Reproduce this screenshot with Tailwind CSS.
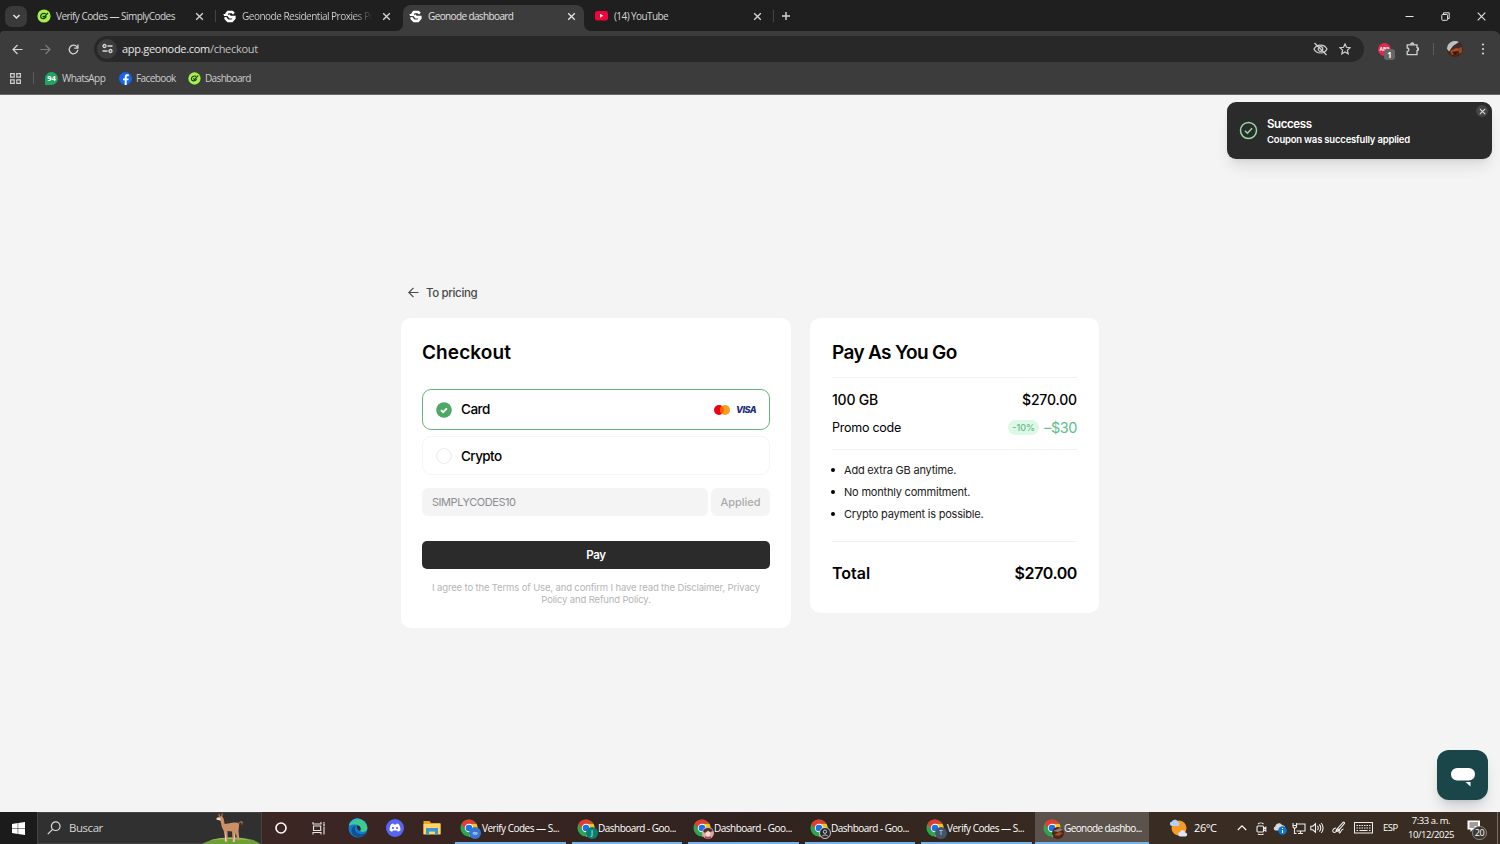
<!DOCTYPE html>
<html lang="es">
<head>
    <meta charset="UTF-8">
    <meta name="viewport" content="width=device-width, initial-scale=1.0">
    <title>Geonode dashboard</title>
    <script src="https://cdn.jsdelivr.net/npm/@tailwindcss/browser@4"></script>
    <style>
        body { font-family: 'Inter', 'Liberation Sans', sans-serif; }
        .ui { font-family: 'Open Sans', 'Noto Sans', sans-serif; }
    </style>
</head>
<body class="w-[1500px] h-[844px] overflow-hidden flex flex-col bg-[#f4f4f4] text-black">

    <!-- Iconos reutilizables -->
    <svg class="hidden">
        <symbol id="x" viewBox="0 0 10 10"><path d="M2 2l6 6M8 2L2 8" stroke="currentColor" stroke-width="1.200" fill="none"/></symbol>
        <symbol id="simply" viewBox="0 0 14 14">
            <circle cx="7" cy="7" r="6.600" fill="#a6f04c"/>
            <path d="M8.800 4.700C6.300 3.700 3.500 5.100 3.700 7.500C3.900 10.300 8.600 10.400 9.300 7.200M5.700 6.900l1.200 1.200L11 4" fill="none" stroke="#1d3b12" stroke-width="1.200"/>
        </symbol>
        <symbol id="geonode" viewBox="0 0 14 14">
            <path d="M11.800 3.800L9.800 2.200H5.300L3.400 4.600M2.300 7.800l.8 1.600 2.300 2.300h4.300l2.500-2.700V7.700H7.600L5.800 5.600" fill="none" stroke="#fff" stroke-width="2.800"/>
            <path d="M.3 4.300h5l1 2.200H1.300z" fill="#fff"/>
        </symbol>
        <symbol id="chrome" viewBox="0 0 20 20">
            <circle cx="10" cy="10" r="9.500" fill="#2da44e"/>
            <path d="M10 5.300h8.200A9.500 9.500 0 0 1 9.600 19.500L14.200 12z" fill="#fbc116"/>
            <path d="M1.800 5.200A9.500 9.500 0 0 1 18.200 5.300H10L6 12.300z" fill="#e53c30"/>
            <circle cx="10" cy="10" r="4.700" fill="#fff"/><circle cx="10" cy="10" r="3.700" fill="#1a73e8"/>
        </symbol>
    </svg>

    <!-- Barra de pestañas -->
    <div class="ui h-[31px] shrink-0 bg-[#1f1f1f] flex items-center pt-px text-[10px] text-[#d6d6d6] whitespace-nowrap">
        <div class="ml-[5px] w-[22px] h-[21px] rounded-[7px] bg-[#3a3a3a] flex items-center justify-center">
            <svg class="w-[9px] h-[9px]" viewBox="0 0 9 9"><path d="M1.500 3l3 3 3-3" fill="none" stroke="#e3e3e3" stroke-width="1.500"/></svg>
        </div>
        <div class="ml-[10px] w-[179px] flex items-center">
            <svg class="w-[14px] h-[14px] shrink-0"><use href="#simply"/></svg>
            <span class="ml-[5px] mt-px flex-1 tracking-[-0.54px]">Verify Codes — SimplyCodes</span>
            <svg class="w-[11px] h-[11px] mr-[11px]"><use href="#x"/></svg>
        </div>
        <div class="ml-[-1px] w-px h-[12px] bg-[#454545]"></div>
        <div class="pl-[7px] w-[187px] flex items-center">
            <svg class="w-[13px] h-[13px] shrink-0"><use href="#geonode"/></svg>
            <span class="ml-[6px] mt-px w-[131px] tracking-[-0.5px] bg-linear-to-r from-[#d6d6d6] from-85% to-[#1f1f1f] bg-clip-text text-transparent">Geonode Residential Proxies Pri</span>
            <svg class="w-[11px] h-[11px] ml-[8px] shrink-0"><use href="#x"/></svg>
        </div>
        <div class="relative self-end shrink-0 w-[181px] h-[26px] rounded-t-[8px] bg-[#3c3c3c] flex items-center pl-[6px] pb-[4px] text-[#e3e3e3]">
            <svg class="absolute -left-[7px] bottom-0 w-[7px] h-[7px]" viewBox="0 0 7 7"><path d="M7 0v7H0A7 7 0 0 0 7 0" fill="#3c3c3c"/></svg>
            <svg class="absolute -right-[7px] bottom-0 w-[7px] h-[7px]" viewBox="0 0 7 7"><path d="M0 0v7H7A7 7 0 0 1 0 0" fill="#3c3c3c"/></svg>
            <svg class="w-[13px] h-[13px]"><use href="#geonode"/></svg>
            <span class="ml-[6px] mt-px flex-1 tracking-[-0.62px]">Geonode dashboard</span>
            <svg class="w-[11px] h-[11px] mr-[7px]"><use href="#x"/></svg>
        </div>
        <div class="w-[189px] pl-[11px] flex items-center">
            <svg class="w-[13px] h-[10px]" viewBox="0 0 13 10"><rect width="13" height="9.500" rx="2.500" fill="#f4033a"/><path d="M5 2.800v4l3.300-2z" fill="#fff"/></svg>
            <span class="ml-[6px] mt-px flex-1 tracking-[-0.58px]">(14) YouTube</span>
            <svg class="w-[11px] h-[11px] mr-[10px]"><use href="#x"/></svg>
        </div>
        <div class="w-px h-[12px] bg-[#454545]"></div>
        <svg class="ml-[7px] w-[10px] h-[10px]" viewBox="0 0 10 10"><path d="M5 1v8M1 5h8" stroke="#d8d8d8" stroke-width="1.400"/></svg>
        <div class="ml-auto flex items-center text-[#e6e6e6]">
            <svg class="w-[9px] h-[9px]" viewBox="0 0 9 9"><path d="M.5 4.500h8" stroke="currentColor"/></svg>
            <svg class="ml-[27px] w-[9px] h-[9px]" viewBox="0 0 9 9" fill="none" stroke="currentColor"><rect x=".8" y="2.500" width="5.800" height="5.800" rx=".8"/><path d="M2.500 2.300V.8h5.700v5.700H6.800"/></svg>
            <svg class="ml-[27px] mr-[14px] w-[9px] h-[9px]" viewBox="0 0 9 9"><path d="M.7.700l7.600 7.600M8.300.700L.7 8.300" stroke="currentColor" stroke-width="1.100"/></svg>
        </div>
    </div>

    <!-- Barra de herramientas -->
    <div class="bg-[#1f1f1f] shrink-0">
        <div class="ui h-[37px] bg-[#3c3c3c] rounded-tr-[6px] rounded-tl-[4px] flex items-center pb-[2px] text-[#d5d5d5]">
            <svg class="ml-[12px] mt-px w-[11px] h-[11px]" viewBox="0 0 11 11" fill="none" stroke="currentColor" stroke-width="1.200"><path d="M10.500 5.500H1M5.500 1L1 5.500 5.500 10"/></svg>
            <svg class="ml-[17px] mt-px w-[11px] h-[11px] text-[#7c7c7c]" viewBox="0 0 11 11" fill="none" stroke="currentColor" stroke-width="1.200"><path d="M.5 5.500H10M5.500 1L10 5.500 5.500 10"/></svg>
            <svg class="ml-[17px] mt-px w-[11px] h-[11px]" viewBox="0 0 11 11" fill="none" stroke="currentColor" stroke-width="1.300"><path d="M9.800 5.800A4.300 4.300 0 1 1 8.800 2.700L9.800 3.800"/><path d="M9.900.5v3.600H6.300"/></svg>
            <div class="ml-[15px] w-[1270px] h-[26px] rounded-full bg-[#282828] flex items-center pl-[3px] pr-[13px]">
                <div class="w-[20px] h-[20px] rounded-full bg-[#3c3c3c] flex items-center justify-center">
                    <svg class="w-[11px] h-[11px]" viewBox="0 0 11 11" fill="none" stroke="#dadada" stroke-width="1.300"><circle cx="2.500" cy="3" r="1.500"/><path d="M5.500 3h5M.5 8h5"/><circle cx="8.500" cy="8" r="1.500"/></svg>
                </div>
                <span class="ml-[5px] mt-[2px] flex-1 text-[11px] tracking-[-0.3px] text-[#e8e8e8]">app.geonode.com<span class="text-[#c2c2c2]">/checkout</span></span>
                <svg class="w-[15px] h-[14px]" viewBox="0 0 15 14" fill="none" stroke="#cfcfcf" stroke-width="1.200"><path d="M1 7c2.500-5.300 10.500-5.300 13 0-2.500 5.300-10.500 5.300-13 0z"/><circle cx="7.500" cy="7" r="2.300"/><path d="M1.500 1l12 12"/></svg>
                <svg class="ml-[11px] w-[12px] h-[12px]" viewBox="0 0 12 12" fill="none" stroke="#cfcfcf" stroke-width="1.200"><path d="M6 1l1.500 3.300 3.600.4-2.700 2.400.8 3.600L6 8.900l-3.200 1.800.8-3.600L.9 4.700l3.600-.4z"/></svg>
            </div>
            <div class="relative ml-[14px] mt-px w-[13px] h-[13px] rounded-full bg-[#e4284a] text-[5px] font-bold text-white text-center leading-[12px]">ABP
                <span class="absolute left-[6px] top-[6px] w-[11px] h-[11px] rounded-[3px] bg-[#666] text-[8px] leading-[11px] text-white">1</span>
            </div>
            <svg class="ml-[15px] w-[14px] h-[14px]" viewBox="0 0 14 14" fill="none" stroke="#cfcfcf" stroke-width="1.300"><path d="M1.200 2.800H11v2.800a1.500 1.500 0 0 1 0 3v4H1.200V9.400a1.700 1.700 0 0 0 0-3.400z"/><path d="M4.700 2.400a1.500 1.500 0 0 1 3 0M11.300 5.700a1.500 1.500 0 0 1 0 2.900" fill="#cfcfcf"/></svg>
            <div class="ml-[13px] w-px h-[12px] bg-[#5c5c5c]"></div>
            <svg class="ml-[13px] w-[16px] h-[16px]" viewBox="0 0 16 16"><circle cx="8" cy="8" r="8" fill="#4c2418"/><path d="M0 8A8 8 0 0 1 12 1L6 5 2 10.500z" fill="#b8c0c0"/><path d="M6 6l7-4 2 3-6 3z" fill="#37302c"/><path d="M3 10l6-3 5 1-4 3-5 3z" fill="#a44c24"/><path d="M5 11l6-1-3 4z" fill="#30150f"/><path d="M12 7l3-1v5l-3 2z" fill="#8f4a2a"/></svg>
            <svg class="ml-[18px] w-[4px] h-[12px]" viewBox="0 0 4 12" fill="#d5d5d5"><circle cx="2" cy="1.500" r="1.100"/><circle cx="2" cy="6" r="1.100"/><circle cx="2" cy="10.500" r="1.100"/></svg>
        </div>
    </div>

    <!-- Marcadores -->
    <div class="ui h-[27px] shrink-0 bg-[#3c3c3c] border-b border-[#6b6b6b] flex items-center pb-[6px] text-[10px] text-[#cccccc]">
        <svg class="ml-[10px] w-[11px] h-[11px]" viewBox="0 0 11 11" fill="none" stroke="#cfcfcf" stroke-width="1.200"><path d="M.6.600h3.600v3.600H.6zM6.800.600h3.600v3.600H6.800zM.6 6.800h3.600v3.600H.6zM6.800 6.800h3.600v3.600H6.800z"/></svg>
        <div class="ml-[12px] w-px h-[12px] bg-[#5c5c5c]"></div>
        <span class="ml-[11px] w-[13px] h-[13px] rounded-full rounded-bl-[3px] bg-[#1fa463] text-white text-[7.500px] font-bold leading-[13px] text-center">94</span>
        <span class="ml-[4px] mt-px w-[43px] tracking-[-0.58px]">WhatsApp</span>
        <svg class="ml-[14px] w-[13px] h-[13px]" viewBox="0 0 13 13"><circle cx="6.500" cy="6.500" r="6.500" fill="#1565f0"/><path d="M7.700 13V8.300h1.700l.3-1.900h-2V5.300c0-.7.3-1.100 1.200-1.100h.9V2.500C8 2.100 5.700 2.300 5.700 4.900v1.500H4v1.900h1.700V13z" fill="#fff"/></svg>
        <span class="ml-[4px] mt-px w-[40px] tracking-[-0.6px]">Facebook</span>
        <svg class="ml-[12px] w-[13px] h-[13px]"><use href="#simply"/></svg>
        <span class="ml-[4px] mt-px tracking-[-0.65px]">Dashboard</span>
    </div>

    <!-- Página de pago -->
    <main class="relative flex-1 bg-[#f4f4f4]">
        <div class="w-[698px] ml-[401px] pt-[188px]">
            <a class="ml-[7px] h-[19px] flex items-center gap-[7px] text-[11.500px] font-medium text-[#4a4a4a]">
                <svg class="w-[11px] h-[11px]" viewBox="0 0 11 11" fill="none" stroke="currentColor" stroke-width="1.200"><path d="M10.500 5.500H.8M5.500.800L.8 5.500l4.700 4.700"/></svg>
                <span class="mt-[2px] tracking-[-0.35px]">To pricing</span>
            </a>
            <div class="mt-[16px] flex items-start justify-between">
                <!-- Formulario -->
                <section class="w-[390px] h-[310px] rounded-[10px] bg-white px-[22px] pt-[21px]">
                    <h1 class="-ml-px h-[28px] leading-[28px] text-[19px] font-semibold tracking-[0.1px]">Checkout</h1>
                    <div class="mt-[22px] -ml-px -mr-px h-[41px] rounded-[9px] border border-[#68b37c] flex items-center px-[13px]">
                        <svg class="w-[16px] h-[16px]" viewBox="0 0 16 16"><circle cx="8" cy="8" r="7.800" fill="#4fa865"/><path d="M5 8.200l2.100 2 3.800-3.900" fill="none" stroke="#fff" stroke-width="1.800"/></svg>
                        <span class="ml-[9px] flex-1 text-[13.500px] font-medium tracking-[-0.5px]">Card</span>
                        <svg class="w-[16px] h-[10px]" viewBox="0 0 16 10"><circle cx="5" cy="5" r="5" fill="#eb001b"/><circle cx="11" cy="5" r="5" fill="#f79e1b"/><path d="M8 1a5 5 0 0 1 0 8 5 5 0 0 1 0-8" fill="#ff5f00"/></svg>
                        <span class="ml-[6px] w-[20px] text-[9px] leading-none font-extrabold italic text-[#1a2a80] tracking-[-0.5px]">VISA</span>
                    </div>
                    <div class="mt-[6px] -ml-px -mr-px h-[39px] rounded-[9px] border border-[#f5f5f5] flex items-center px-[13px]">
                        <span class="w-[16px] h-[16px] rounded-full border border-[#ececec]"></span>
                        <span class="ml-[9px] mt-[2px] text-[13.500px] font-medium tracking-[-0.6px]">Crypto</span>
                    </div>
                    <div class="mt-[13px] -ml-px -mr-px flex gap-[3px] text-[11px]">
                        <div class="w-[286px] h-[28px] rounded-[6px] bg-[#f4f4f4] pl-[10px] leading-[28px] text-[#8b8b92] tracking-[-0.45px]">SIMPLYCODES10</div>
                        <div class="flex-1 h-[28px] rounded-[6px] bg-[#f4f4f4] text-center leading-[28px] text-[#ababab] font-medium">Applied</div>
                    </div>
                    <button class="mt-[25px] -ml-px block w-[348px] h-[28px] rounded-[5px] bg-[#2b2b2b] pt-px text-white text-[11.500px] font-semibold tracking-[-0.3px]">Pay</button>
                    <p class="mt-[13px] w-[346px] text-center text-[9.500px] leading-[12px] text-[#b5b5b5] tracking-[-0.14px]">I agree to the Terms of Use, and confirm I have read the Disclaimer, Privacy<br>Policy and Refund Policy.</p>
                </section>

                <!-- Resumen -->
                <section class="w-[289px] h-[295px] rounded-[10px] bg-white px-[22px] pt-[21px]">
                    <h2 class="h-[38px] leading-[28px] text-[19px] font-semibold tracking-[-0.65px]">Pay As You Go</h2>
                    <div class="h-[73px] border-y border-[#f1f1f1] pt-[9px]">
                        <div class="h-[25px] flex items-center justify-between font-medium text-[14px]"><span class="tracking-[-0.2px]">100 GB</span><span class="tracking-[-0.15px]">$270.00</span></div>
                        <div class="mt-[3px] h-[25px] flex items-center text-[12.500px]">
                            <span class="flex-1 mt-px tracking-[-0.25px]">Promo code</span>
                            <span class="w-[31px] h-[15px] rounded-full bg-[#def8e6] text-center text-[9px] leading-[15px] font-medium text-[#5dbd88]">-10%</span>
                            <span class="ml-[5px] text-[14.500px] text-[#5dbd8b] tracking-[-0.45px]">–$30</span>
                        </div>
                    </div>
                    <ul class="h-[92px] pt-[9px] border-b border-[#f1f1f1] text-[11px] leading-[22px] text-[#202020] tracking-[-0.2px]">
                        <li class="flex items-center gap-[9px]"><i class="-ml-px w-[4px] h-[4px] rounded-full bg-black"></i><span>Add extra GB anytime.</span></li>
                        <li class="flex items-center gap-[9px]"><i class="-ml-px w-[4px] h-[4px] rounded-full bg-black"></i><span>No monthly commitment.</span></li>
                        <li class="flex items-center gap-[9px]"><i class="-ml-px w-[4px] h-[4px] rounded-full bg-black"></i><span>Crypto payment is possible.</span></li>
                    </ul>
                    <div class="mt-[18px] h-[25px] flex items-center justify-between text-[16px] font-semibold"><span>Total</span><span class="tracking-[-0.4px]">$270.00</span></div>
                </section>
            </div>
        </div>

        <!-- Aviso -->
        <div class="absolute left-[1227px] top-[7px] w-[265px] h-[57px] rounded-[9px] bg-[#2b2b2b] shadow-lg shadow-black/10 flex items-center pl-[12px] text-white">
            <svg class="w-[19px] h-[19px]" viewBox="0 0 19 19" fill="none" stroke="#94dba5" stroke-width="1.500"><circle cx="9.500" cy="9.500" r="8"/><path d="M6 9.800l2.400 2.400 4.700-4.900"/></svg>
            <div class="ml-[9px] pt-[2px]">
                <p class="text-[11.500px] leading-[16px] font-semibold tracking-[-0.4px]">Success</p>
                <p class="text-[9.500px] leading-[15px] font-semibold tracking-[-0.2px]">Coupon was succesfully applied</p>
            </div>
            <span class="absolute right-[4px] top-[3px] w-[12px] h-[12px] rounded-full bg-[#444] flex items-center justify-center text-[#ddd]"><svg class="w-[9px] h-[9px]"><use href="#x"/></svg></span>
        </div>

        <!-- Botón de chat -->
        <div class="absolute left-[1437px] top-[655px] w-[51px] h-[50px] rounded-[12px] bg-[#1a4649] shadow-lg shadow-black/15 flex items-center justify-center">
            <svg class="w-[24px] h-[20px] mt-[4px]" viewBox="0 0 24 20" fill="#fff"><rect y="1" width="24" height="12.500" rx="6.200"/><path d="M14.500 15h5v4.500z"/></svg>
        </div>
    </main>

    <!-- Barra de tareas -->
    <footer class="ui relative h-[32px] shrink-0 bg-linear-to-r from-[#3c2623] from-20% via-[#30231f] via-50% to-[#392c22] to-75% flex items-center text-white text-[10px] whitespace-nowrap">
        <div class="w-[37px] h-full bg-[#1b1b1b] flex items-center justify-center">
            <svg class="w-[13px] h-[13px]" viewBox="0 0 13 13" fill="#fff"><path d="M0 1.900L5.700 1v5.200H0zM6.200.900L13 0v6.200H6.200zM0 6.800h5.700V12L0 11.100zM6.200 6.800H13V13l-6.800-.9z"/></svg>
        </div>
        <div class="relative w-[225px] h-full bg-[#303030] border border-[#444] flex items-center pl-[9px]">
            <svg class="w-[14px] h-[14px]" viewBox="0 0 14 14" fill="none" stroke="#ddd" stroke-width="1.200"><circle cx="8.700" cy="5.200" r="4.300"/><path d="M5.600 8.300L.8 13.200"/></svg>
            <span class="ml-[8px] text-[11.500px] text-[#d5d5d5] tracking-[-0.45px]">Buscar</span>
            <svg class="absolute right-0 bottom-[-1px] w-[60px] h-[32px]" viewBox="0 0 60 32">
                <path d="M1 32C14 24 50 23 59 32z" fill="#6f9d36"/><path d="M8 28.500c12-4 32-4 42 0-14-2-28-2-42 0z" fill="#9dbd51"/>
                <path d="M18.500 4.500l2.500-.5 1.500 2.500 1.200 5.500 9.300-1.500 4 .3 1.200 1.700-.7 6.500 1 9.500h-2l-1.800-8-1.200 9.500h-2l-.4-10.500-4.600-.5.300 11h-2.200l-1.800-11-2-4-1.300-6.500-4-1 .6-2z" fill="#cb9068"/>
                <path d="M15.500 6l3.500 0 1 2.500-4.200-.8zM24.500 19.500l1 10h-1.700zM34 20l-.5 10h-1.500z" fill="#f0d9c2"/>
                <path d="M37.500 11.500l2.500-2 1.500 1-1 2" fill="none" stroke="#a3673f" stroke-width="1.200"/><path d="M18.500 4.500L17.800 2M20.800 4.200L21.200 1.500" stroke="#b98765" stroke-width="1.100"/>
            </svg>
        </div>
        <svg class="ml-[13px] w-[12px] h-[12px]" viewBox="0 0 12 12"><circle cx="6" cy="6" r="5" fill="none" stroke="#fff" stroke-width="1.600"/></svg>
        <svg class="ml-[25px] w-[14px] h-[14px]" viewBox="0 0 14 14" fill="none" stroke="#e6e6e6" stroke-width="1.100"><path d="M1 1v2h8V1M1.500 5h7.200v4.500H1.500zM1 13.500v-2h8v2M12 1v1.800M12 5.500v8"/><path d="M11.200 4h1.700" stroke-width="1.600"/></svg>
        <svg class="ml-[22px] w-[20px] h-[20px]" viewBox="0 0 20 20"><circle cx="10" cy="10" r="9.500" fill="#1479cc"/><path d="M.8 8C2 1.500 9-1 14 2c5 2.500 6.500 8 4.500 10.500-2 2-6 1.500-6.500.5 1-1 1.500-5-2.500-6C6 6 2 7 .8 8z" fill="#3ccb91"/><path d="M.8 8C2 1.500 9-1 13 1.500 8 1.500 3 4 .8 8z" fill="#32b5e3"/><path d="M8 7.500C5.500 10 6.500 15 12 16c3 .5 5-.5 6.300-1.800C15 20.500 6.500 20.500 4 15 2.500 11 5 8 8 7.500z" fill="#125191"/><path d="M12 12.800c-2-.5-3.500-2-3-5.300 3.500 0 4.500 3.500 3 5.300z" fill="#36291f"/></svg>
        <svg class="ml-[18px] w-[18px] h-[18px]" viewBox="0 0 18 18"><circle cx="9" cy="9" r="9" fill="#5865f2"/><path d="M5 5.500c1-.7 2-.9 2.400-.9l.4.800h2.400l.4-.8c.5 0 1.500.2 2.400.9 1.200 2 1.600 4 1.400 6-.9.700-1.800 1.100-2.500 1.200l-.8-1.200H6.900l-.8 1.200c-.7-.1-1.600-.5-2.500-1.200-.2-2 .2-4 1.400-6z" fill="#fff"/><circle cx="7" cy="9" r="1.100" fill="#5865f2"/><circle cx="11" cy="9" r="1.100" fill="#5865f2"/></svg>
        <svg class="ml-[19px] w-[18px] h-[16px]" viewBox="0 0 18 16"><path d="M.5 1h6l1.500 2h9.500v11H.5z" fill="#eda624"/><path d="M.5 4h17v10.500H.5z" fill="#ffd667"/><path d="M3 8h12v6.500h-3v-3H6v3H3z" fill="#3c97d3"/></svg>

        <div class="ml-[14px] flex h-full gap-[6px]">
            <div class="w-[111px] h-full border-b-2 border-[#76b3e6] flex items-center pl-[5px] pt-[3px]">
                <span class="relative w-[20px] h-[20px]"><svg class="w-[18px] h-[18px]"><use href="#chrome"/></svg><b class="absolute left-[9px] top-[8px] w-[12px] h-[12px] rounded-full bg-[#3975d0] text-[#b4d2ff] text-[8px] leading-[12px] text-center">∞</b></span>
                <span class="ml-[2px] tracking-[-0.5px]">Verify Codes — S...</span>
            </div>
            <div class="w-[110px] h-full border-b-2 border-[#76b3e6] flex items-center pl-[5px] pt-[3px]">
                <span class="relative w-[20px] h-[20px]"><svg class="w-[18px] h-[18px]"><use href="#chrome"/></svg><b class="absolute left-[9px] top-[8px] w-[12px] h-[12px] rounded-full bg-[#078072] text-white text-[7px] font-normal leading-[12px] text-center">J</b></span>
                <span class="ml-[1px] tracking-[-0.52px]">Dashboard - Goo...</span>
            </div>
            <div class="w-[111px] h-full border-b-2 border-[#76b3e6] flex items-center pl-[5px] pt-[3px]">
                <span class="relative w-[20px] h-[20px]"><svg class="w-[18px] h-[18px]"><use href="#chrome"/></svg><svg class="absolute left-[9px] top-[8px] w-[12px] h-[12px]" viewBox="0 0 12 12"><circle cx="6" cy="6" r="6" fill="#d8a5a5"/><path d="M1 4c2-4 8-4 10 0L8 5 6 3.500 3 6z" fill="#4a3028"/><circle cx="6" cy="7" r="2.500" fill="#f4d8c8"/><path d="M3 10l3 1 3-1" stroke="#b23b5c" stroke-width="1.500"/></svg></span>
                <span class="ml-[1px] tracking-[-0.52px]">Dashboard - Goo...</span>
            </div>
            <div class="w-[110px] h-full border-b-2 border-[#76b3e6] flex items-center pl-[5px] pt-[3px]">
                <span class="relative w-[20px] h-[20px]"><svg class="w-[18px] h-[18px]"><use href="#chrome"/></svg><svg class="absolute left-[9px] top-[8px] w-[12px] h-[12px]" viewBox="0 0 12 12" fill="none" stroke="#ccc"><circle cx="6" cy="6" r="5.500" fill="#262626"/><circle cx="6" cy="4.700" r="1.700"/><path d="M2.800 9.500c1.500-2 5-2 6.400 0"/></svg></span>
                <span class="ml-[1px] tracking-[-0.52px]">Dashboard - Goo...</span>
            </div>
            <div class="w-[111px] h-full border-b-2 border-[#76b3e6] flex items-center pl-[5px] pt-[3px]">
                <span class="relative w-[20px] h-[20px]"><svg class="w-[18px] h-[18px]"><use href="#chrome"/></svg><b class="absolute left-[9px] top-[8px] w-[12px] h-[12px] rounded-full bg-[#40566b] text-[#cfe0f0] text-[7px] font-normal leading-[12px] text-center">T</b></span>
                <span class="ml-[1px] tracking-[-0.5px]">Verify Codes — S...</span>
            </div>
            <div class="-ml-[3px] w-[114px] h-full bg-[#5b524c] border-b-2 border-[#76b3e6] flex items-center pl-[8px] pt-[3px]">
                <span class="relative w-[20px] h-[20px]"><svg class="w-[18px] h-[18px]"><use href="#chrome"/></svg><svg class="absolute left-[9px] top-[8px] w-[12px] h-[12px]" viewBox="0 0 12 12"><circle cx="6" cy="6" r="6" fill="#4c2418"/><path d="M1 4l7-3 3 2-5 2z" fill="#8f8078"/><path d="M2 8l5-3 4 1-4 3z" fill="#a44c24"/></svg></span>
                <span class="ml-[1px] tracking-[-0.6px]">Geonode dashbo...</span>
            </div>
        </div>

        <svg class="ml-[20px] w-[19px] h-[19px]" viewBox="0 0 19 19"><circle cx="10" cy="9" r="7.500" fill="#f49b26"/><path d="M2.500 7a2.300 2.300 0 0 1 .5-4.500C4 0 8 0 8.800 2.600 11 2.600 11 7 8.800 7z" fill="#b5d0f5"/><path d="M11 17.500a2.300 2.300 0 0 1 0-4.500c1-2.500 5-2 5.300.5 2.500.3 2.500 4 0 4z" fill="#dbe5f5"/></svg>
        <span class="ml-[6px] w-[30px] text-[11px] tracking-[-0.4px]">26°C</span>
        <svg class="ml-[13px] w-[10px] h-[10px]" viewBox="0 0 10 10" fill="none" stroke="#fff" stroke-width="1.100"><path d="M.8 7L5 2.800 9.200 7"/></svg>
        <svg class="ml-[9px] w-[11px] h-[13px]" viewBox="0 0 11 13" fill="none" stroke="#eee" stroke-width="1.100"><rect x="1" y="4" width="6.500" height="6" rx="1"/><path d="M7.500 6.500l2.300-1.300v3.900L7.500 7.800M2 2C3.500.600 6 .600 7.500 2M2 12c1.500 1 4 1 5.500 0"/></svg>
        <svg class="ml-[6px] w-[14px] h-[14px]" viewBox="0 0 14 14"><path d="M2.500 9.500C.5 9 0 6.500 2.200 5.500 3 2 7.500 1.200 9 4c2 0 3 1.500 3 2.500v3z" fill="#d8d8d8"/><circle cx="9.500" cy="9.500" r="4.200" fill="#0a78d4"/><path d="M9.500 7v1M9.500 8.900v3" stroke="#fff" stroke-width="1.100"/></svg>
        <svg class="ml-[5px] w-[14px] h-[13px]" viewBox="0 0 14 13" fill="none" stroke="#eee" stroke-width="1.100"><path d="M5 2h8v7H4.500M6 11.500h5M8.500 9v2.500M2.500 6v5.500H4.500M1 1v2.500h3.500V1M1 3.500V5l1 1h1.500l1-1V3.500"/></svg>
        <svg class="ml-[4px] w-[14px] h-[12px]" viewBox="0 0 14 12" fill="none" stroke="#eee" stroke-width="1.100"><path d="M.8 4.200h2L5.500 1.800v8.400L2.800 7.800h-2zM7.500 4c1 1 1 3 0 4M9.300 2.500c2 2 2 5 0 7M11.200 1c2.500 2.800 2.500 7.200 0 10"/></svg>
        <svg class="ml-[8px] w-[14px] h-[14px]" viewBox="0 0 14 14" fill="none" stroke="#eee" stroke-width="1.100"><path d="M4.500 8.500L11 1.500c1-.8 2 .2 1.300 1.200L6 10l-2.200.7zM4 7C1 7-.5 10.500 2 11.500c2.500.7 3-4 5.200-3.500 1 1-1 3.500.3 4C9 12.500 8.500 8 11.500 8"/></svg>
        <svg class="ml-[8px] w-[19px] h-[12px]" viewBox="0 0 19 12" fill="none" stroke="#eee"><rect x=".5" y=".5" width="18" height="10.500"/><path d="M2.500 3.500h14M2.500 6h14" stroke-dasharray="1.500 1"/><path d="M2.500 8.500h1.500M5.500 8.500h8M15 8.500h1.500"/></svg>
        <span class="ml-[10px] w-[15px] text-[9.500px] tracking-[-0.5px]">ESP</span>
        <div class="ml-[8px] w-[50px] text-center text-[9.500px] leading-[14px] tracking-[-0.45px]">7:33 a. m.<br>10/12/2025</div>
        <div class="relative ml-[11px] w-[22px] h-[20px]">
            <svg class="absolute left-0 top-[2px] w-[14px] h-[13px]" viewBox="0 0 14 13"><path d="M.5.500h12.500v9H6L3.500 12V9.500h-3z" fill="#fff"/><path d="M2.500 3h8.500M2.500 5h8.500M2.500 7h5" stroke="#443a35"/></svg>
            <span class="absolute left-[5px] top-[8px] w-[15px] h-[14px] rounded-full bg-[#3c3633] border border-[#8b8582] text-[9px] leading-[12px] text-center tracking-[-0.3px]">20</span>
        </div>
        <div class="absolute right-[2px] top-0 w-px h-full bg-[#756d69]"></div>
    </footer>
</body>
</html>
